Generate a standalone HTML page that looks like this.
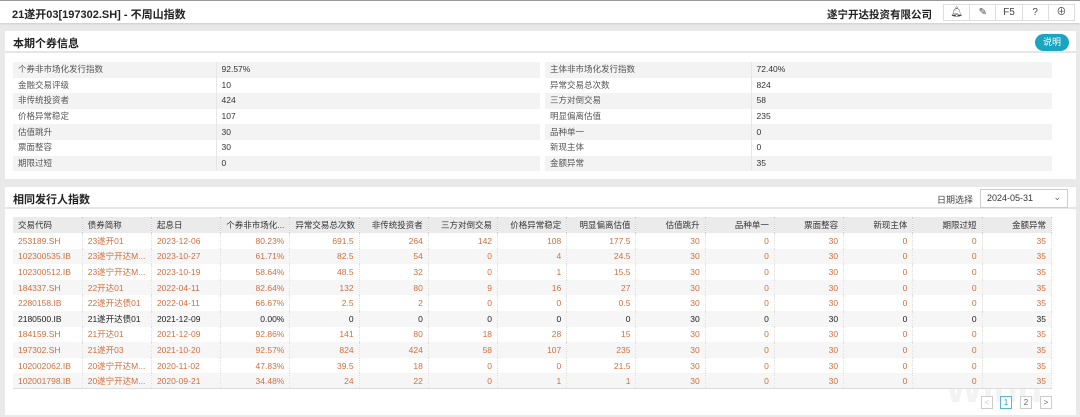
<!DOCTYPE html>
<html><head><meta charset="utf-8"><style>
*{margin:0;padding:0;box-sizing:border-box}
body{width:1080px;height:417px;background:#e9e9e9;font-family:"Liberation Sans","Noto Sans CJK SC",sans-serif;font-size:9px;color:#333;position:relative;overflow:hidden}
.top{position:absolute;left:0;top:0;width:1080px;height:23px;background:#fff;border-top:1px solid #999;box-shadow:0 1px 2px #ccc}
.top .t{position:absolute;left:12px;top:5px;font-size:11px;font-weight:bold;color:#222}
.top .co{position:absolute;right:148px;top:6px;font-size:10.5px;font-weight:bold;color:#222;white-space:nowrap}
.icons{position:absolute;left:943px;top:3px;width:132px;height:17px;border:1px solid #ddd;display:flex}
.icons div{flex:1;border-right:1px solid #ddd;text-align:center;font-size:10px;line-height:15px;color:#444}
.icons div:last-child{border-right:none}
.panel{position:absolute;left:5px;width:1071px;background:#fff}
.ph{height:22px;border-bottom:2px solid #e6e6e6;font-size:11px;font-weight:bold;padding:4px 0 0 8px;color:#222}
.btn{position:absolute;right:7px;top:3px;width:34px;height:17px;border-radius:9px;background:#1aa5c0;color:#fff;font-size:9px;text-align:center;line-height:17px}
table{border-collapse:collapse;position:absolute}
td,th{white-space:nowrap;overflow:hidden}
.info td{height:15.6px;padding:0 5px;font-size:8.5px;line-height:15px}
.info tr:nth-child(odd){background:#f3f3f3}
.info td.l{color:#555}
.info td.v{border-left:1px solid #e6e6e6}
.g th{background:#ebebeb;font-weight:normal;height:16px;font-size:8.5px;color:#333;text-align:right;padding:0 5px;border-right:1px dotted #ccc}
.g td{height:15.6px;text-align:right;padding:0 5px;color:#d06f3e;font-size:8.5px;border-right:1px dotted #ddd}
.g th:nth-child(-n+3),.g td:nth-child(-n+3){text-align:left}
.g tr:nth-child(even) td{background:#f6f6f6}
.g tr.k td{color:#222}
.g tbody tr:last-child td{border-bottom:1px solid #ddd}
.sel{position:absolute;left:980px;top:189px;width:88px;height:19px;border:1px solid #ccc;font-size:9px;padding:3px 0 0 6px;color:#333}
.pg{position:absolute;top:396px;width:12px;height:13px;border:1px solid #ccc;font-size:8px;text-align:center;line-height:11px;color:#666;background:#fff}
</style></head><body>
<div class="top"><div class="t">21遂开03[197302.SH] - 不周山指数</div><div class="co">遂宁开达投资有限公司</div>
<div class="icons"><div>🔔︎</div><div>✎</div><div>F5</div><div>?</div><div>⊕</div></div></div>

<div class="panel" style="top:31px;height:148px"><div class="ph">本期个券信息</div><div class="btn">说明</div>
<table class="info" style="left:8px;top:31px;width:527px"><colgroup><col style="width:203px"><col></colgroup>
<tr><td class="l">个券非市场化发行指数</td><td class="v">92.57%</td></tr>
<tr><td class="l">金融交易评级</td><td class="v">10</td></tr>
<tr><td class="l">非传统投资者</td><td class="v">424</td></tr>
<tr><td class="l">价格异常稳定</td><td class="v">107</td></tr>
<tr><td class="l">估值跳升</td><td class="v">30</td></tr>
<tr><td class="l">票面整容</td><td class="v">30</td></tr>
<tr><td class="l">期限过短</td><td class="v">0</td></tr></table>
<table class="info" style="left:540px;top:31px;width:507px"><colgroup><col style="width:206px"><col></colgroup>
<tr><td class="l">主体非市场化发行指数</td><td class="v">72.40%</td></tr>
<tr><td class="l">异常交易总次数</td><td class="v">824</td></tr>
<tr><td class="l">三方对倒交易</td><td class="v">58</td></tr>
<tr><td class="l">明显偏离估值</td><td class="v">235</td></tr>
<tr><td class="l">品种单一</td><td class="v">0</td></tr>
<tr><td class="l">新现主体</td><td class="v">0</td></tr>
<tr><td class="l">金额异常</td><td class="v">35</td></tr></table>
</div>

<div class="panel" style="top:187px;height:228px"><div class="ph">相同发行人指数</div>
<div style="position:absolute;left:932px;top:6px;font-size:9px;color:#444">日期选择</div>
<div style="position:absolute;left:940px;top:180px;font-size:40px;font-weight:bold;color:#f3f3f3">Wind</div>
<table class="g" style="left:8px;top:30px;width:1039px;table-layout:fixed">
<thead><tr><th>交易代码</th><th>债券简称</th><th>起息日</th><th>个券非市场化...</th><th>异常交易总次数</th><th>非传统投资者</th><th>三方对倒交易</th><th>价格异常稳定</th><th>明显偏离估值</th><th>估值跳升</th><th>品种单一</th><th>票面整容</th><th>新现主体</th><th>期限过短</th><th>金额异常</th></tr></thead>
<tbody>
<tr><td>253189.SH</td><td>23遂开01</td><td>2023-12-06</td><td>80.23%</td><td>691.5</td><td>264</td><td>142</td><td>108</td><td>177.5</td><td>30</td><td>0</td><td>30</td><td>0</td><td>0</td><td>35</td></tr>
<tr><td>102300535.IB</td><td>23遂宁开达M...</td><td>2023-10-27</td><td>61.71%</td><td>82.5</td><td>54</td><td>0</td><td>4</td><td>24.5</td><td>30</td><td>0</td><td>30</td><td>0</td><td>0</td><td>35</td></tr>
<tr><td>102300512.IB</td><td>23遂宁开达M...</td><td>2023-10-19</td><td>58.64%</td><td>48.5</td><td>32</td><td>0</td><td>1</td><td>15.5</td><td>30</td><td>0</td><td>30</td><td>0</td><td>0</td><td>35</td></tr>
<tr><td>184337.SH</td><td>22开达01</td><td>2022-04-11</td><td>82.64%</td><td>132</td><td>80</td><td>9</td><td>16</td><td>27</td><td>30</td><td>0</td><td>30</td><td>0</td><td>0</td><td>35</td></tr>
<tr><td>2280158.IB</td><td>22遂开达债01</td><td>2022-04-11</td><td>66.67%</td><td>2.5</td><td>2</td><td>0</td><td>0</td><td>0.5</td><td>30</td><td>0</td><td>30</td><td>0</td><td>0</td><td>35</td></tr>
<tr class="k"><td>2180500.IB</td><td>21遂开达债01</td><td>2021-12-09</td><td>0.00%</td><td>0</td><td>0</td><td>0</td><td>0</td><td>0</td><td>30</td><td>0</td><td>30</td><td>0</td><td>0</td><td>35</td></tr>
<tr><td>184159.SH</td><td>21开达01</td><td>2021-12-09</td><td>92.86%</td><td>141</td><td>80</td><td>18</td><td>28</td><td>15</td><td>30</td><td>0</td><td>30</td><td>0</td><td>0</td><td>35</td></tr>
<tr><td>197302.SH</td><td>21遂开03</td><td>2021-10-20</td><td>92.57%</td><td>824</td><td>424</td><td>58</td><td>107</td><td>235</td><td>30</td><td>0</td><td>30</td><td>0</td><td>0</td><td>35</td></tr>
<tr><td>102002062.IB</td><td>20遂宁开达M...</td><td>2020-11-02</td><td>47.83%</td><td>39.5</td><td>18</td><td>0</td><td>0</td><td>21.5</td><td>30</td><td>0</td><td>30</td><td>0</td><td>0</td><td>35</td></tr>
<tr><td>102001798.IB</td><td>20遂宁开达M...</td><td>2020-09-21</td><td>34.48%</td><td>24</td><td>22</td><td>0</td><td>1</td><td>1</td><td>30</td><td>0</td><td>30</td><td>0</td><td>0</td><td>35</td></tr>
</tbody></table>
</div>
<div class="sel">2024-05-31<span style="position:absolute;right:6px;top:2px;color:#666">⌄</span></div>
<div class="pg" style="left:981px;color:#ccc">&lt;</div>
<div class="pg" style="left:1000px;border-color:#5bb8cc;color:#1aa5c0">1</div>
<div class="pg" style="left:1020px">2</div>
<div class="pg" style="left:1040px">&gt;</div>
</body></html>
